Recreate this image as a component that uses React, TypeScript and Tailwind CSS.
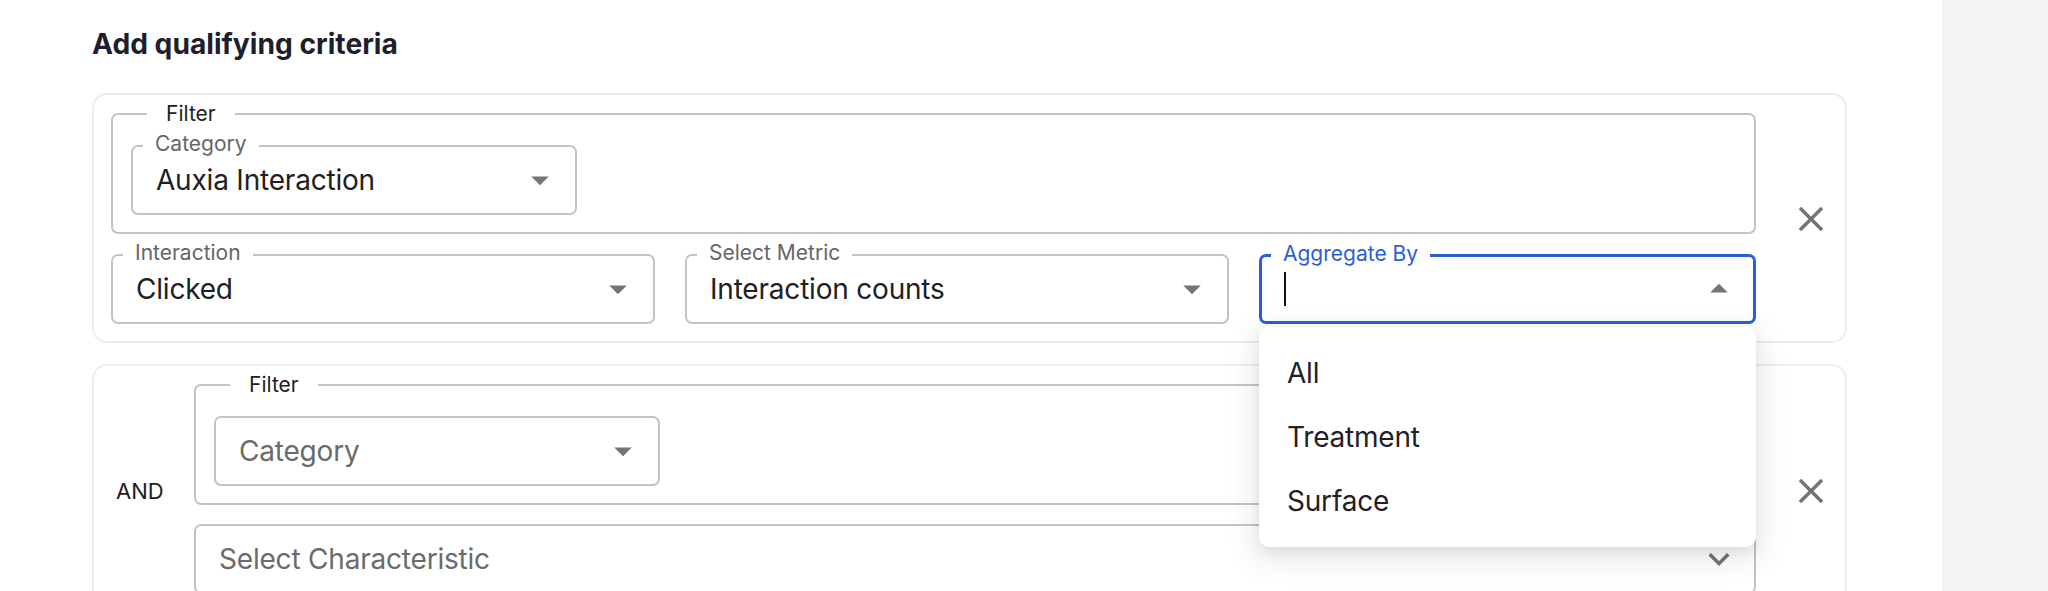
import React from "react";

const ArrowDropDown = () => (
  <svg viewBox="0 0 24 24" className="h-[42px] w-[42px] fill-[#757575]">
    <path d="M7 10l5 5 5-5z" />
  </svg>
);

const ArrowDropUp = () => (
  <svg viewBox="0 0 24 24" className="h-[42px] w-[42px] fill-[#757575]">
    <path d="M7 14l5-5 5 5z" />
  </svg>
);

const ExpandMore = () => (
  <svg viewBox="0 0 24 24" className="h-[42px] w-[42px] fill-[#757575]">
    <path d="M16.59 8.59 12 13.17 7.41 8.59 6 10l6 6 6-6z" />
  </svg>
);

const CloseIcon = () => (
  <svg viewBox="0 0 24 24" className="h-[42px] w-[42px] fill-[#757575]">
    <path d="M19 6.41 17.59 5 12 10.59 6.41 5 5 6.41 10.59 12 5 17.59 6.41 19 12 13.41 17.59 19 19 17.59 13.41 12z" />
  </svg>
);

type SelectProps = {
  label?: string;
  value?: string;
  placeholder?: string;
  className?: string;
  icon?: React.ReactNode;
};

function OutlinedSelect({ label, value, placeholder, className = "", icon }: SelectProps) {
  return (
    <div
      className={`relative flex h-[70px] items-center rounded-[7px] border-2 border-[#c4c4c4] bg-white pl-[23px] ${className}`}
    >
      {label && (
        <span className="absolute left-[10px] top-[-3px] -translate-y-1/2 bg-white px-[12px] text-[21px] leading-[24px] text-[#666666]">
          {label}
        </span>
      )}
      {value ? (
        <span className="text-[28px] leading-[34px] tracking-[-0.2px] text-[#1f2023]">{value}</span>
      ) : (
        <span className="text-[28px] leading-[34px] tracking-[-0.2px] text-[#6b6b6b]">{placeholder}</span>
      )}
      <span className="absolute right-[14px] top-1/2 -translate-y-1/2">
        {icon ?? <ArrowDropDown />}
      </span>
    </div>
  );
}

function FilterFieldset({ children }: { children: React.ReactNode }) {
  return (
    <div className="relative rounded-[7px] border-2 border-[#c4c4c4] pb-[17px] pl-[18px] pt-[30px]">
      <span className="absolute left-[34px] top-[-1px] -translate-y-1/2 bg-white px-[19px] text-[21px] leading-[24px] text-[#222222]">
        Filter
      </span>
      {children}
    </div>
  );
}

function AggregateBy() {
  const options = ["All", "Treatment", "Surface"];
  return (
    <div className="relative flex h-[70px] w-[497px] items-center rounded-[7px] border-[3px] border-[#2b5fd9] bg-white pl-[22px]">
      <span className="absolute left-[9px] top-[-3px] -translate-y-1/2 bg-white px-[12px] text-[21px] leading-[24px] text-[#2b5fd9]">
        Aggregate By
      </span>
      <span className="h-[34px] w-[2px] bg-[#111111]" />
      <span className="absolute right-[13px] top-1/2 -translate-y-1/2">
        <ArrowDropUp />
      </span>
      <div className="absolute left-[-3px] right-[-3px] top-full z-20 mt-[6px] rounded-[10px] bg-white py-[14px] shadow-[0_8px_30px_6px_rgba(0,0,0,0.09),0_6px_12px_rgba(0,0,0,0.06)]">
        {options.map((o) => (
          <div
            key={o}
            className="flex h-[64px] items-center pl-[28px] text-[28px] leading-[34px] tracking-[-0.2px] text-[#1f2028]"
          >
            {o}
          </div>
        ))}
      </div>
    </div>
  );
}

export default function App() {
  return (
    <div className="flex h-[591px] overflow-hidden bg-white font-['Inter',sans-serif]">
      <main className="h-[591px] w-[1942px] shrink-0 pl-[92px] pr-[95px]">
        <h2 className="pt-[28px] text-[28.2px] font-bold leading-[32px] text-[#1e1f2b]">
          Add qualifying criteria
        </h2>

        <div className="mt-[33px] flex rounded-[15px] border-2 border-[#ededed] bg-white pb-[17px] pl-[17px] pr-[13px] pt-[18px]">
          <div className="flex flex-1 flex-col gap-[20px]">
            <FilterFieldset>
              <OutlinedSelect label="Category" value="Auxia Interaction" className="w-[446px]" />
            </FilterFieldset>
            <div className="flex gap-[30px]">
              <OutlinedSelect label="Interaction" value="Clicked" className="flex-1" />
              <OutlinedSelect label="Select Metric" value="Interaction counts" className="flex-1" />
              <AggregateBy />
            </div>
          </div>
          <div className="ml-[34px] flex w-[42px] items-center">
            <CloseIcon />
          </div>
        </div>

        <div className="mt-[21px] flex rounded-[15px] border-2 border-[#ededed] bg-white pb-[17px] pl-[17px] pr-[13px] pt-[18px]">
          <div className="flex w-[83px] items-center pl-[5px] text-[22px] leading-[28px] text-[#1f2023]">
            AND
          </div>
          <div className="flex flex-1 flex-col gap-[19px] pb-[4px]">
            <FilterFieldset>
              <OutlinedSelect placeholder="Category" className="w-[446px]" />
            </FilterFieldset>
            <OutlinedSelect placeholder="Select Characteristic" icon={<ExpandMore />} />
          </div>
          <div className="ml-[34px] flex w-[42px] items-center">
            <CloseIcon />
          </div>
        </div>
      </main>
      <aside className="h-[591px] flex-1 bg-[#f3f3f3]" />
    </div>
  );
}
